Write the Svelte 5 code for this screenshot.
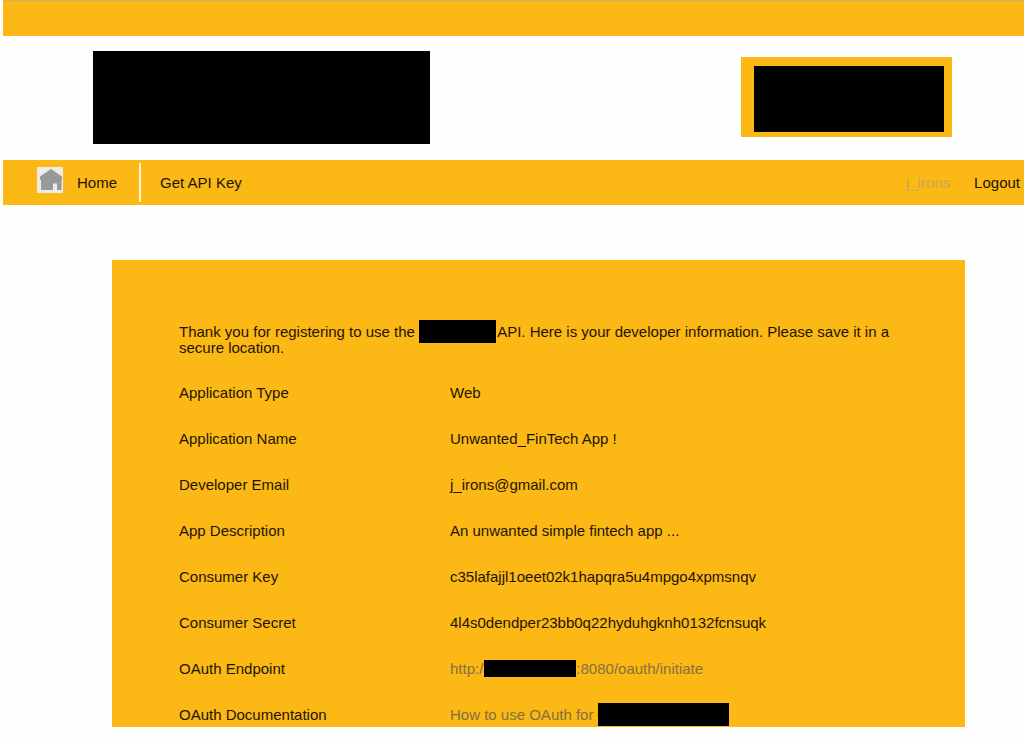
<script>
  const details = [
    { label: 'Application Type', value: 'Web' },
    { label: 'Application Name', value: 'Unwanted_FinTech App !' },
    { label: 'Developer Email', value: 'j_irons@gmail.com' },
    { label: 'App Description', value: 'An unwanted simple fintech app ...' },
    { label: 'Consumer Key', value: 'c35lafajjl1oeet02k1hapqra5u4mpgo4xpmsnqv' },
    { label: 'Consumer Secret', value: '4l4s0dendper23bb0q22hyduhgknh0132fcnsuqk' }
  ];
</script>

<div class="page">
  <div class="strip"></div>

  <header>
    <div class="brand"></div>
    <div class="badge"><div class="badge-fill"></div></div>
  </header>

  <nav>
    <a class="home" href="#home">
      <svg width="26" height="26" viewBox="0 0 26 26" aria-hidden="true">
        <rect width="26" height="26" fill="#ececec" />
        <path d="M14 2 L25 9.5 V13 H24.5 V23 H20 V16.5 H16 V23 H4 V13 H3 V9.5 Z" fill="#999" />
      </svg>
      <span>Home</span>
    </a>
    <a class="key" href="#key">Get API Key</a>
    <span class="user">j_irons</span>
    <a href="#logout">Logout</a>
  </nav>

  <main>
    <p>
      Thank you for registering to use the <span class="mask name"></span>API. Here is your developer
      information. Please save it in a secure location.
    </p>
    <table>
      <tbody>
        {#each details as item}
          <tr><th scope="row">{item.label}</th><td>{item.value}</td></tr>
        {/each}
        <tr>
          <th scope="row">OAuth Endpoint</th>
          <td><a href="#endpoint">http:/<span class="mask host"></span>:8080/oauth/initiate</a></td>
        </tr>
        <tr>
          <th scope="row">OAuth Documentation</th>
          <td><a href="#docs">How to use OAuth for <span class="mask product"></span></a></td>
        </tr>
      </tbody>
    </table>
  </main>
</div>

<style>
  :global(body) {
    background: #fefefe;
  }

  .page {
    padding: 0 0 18px 3px;
    font: 15px/16px 'Liberation Sans', Arial, sans-serif;
    color: #1c1503;
  }

  a {
    color: inherit;
    text-decoration: none;
  }

  .strip {
    height: 35px;
    background: #fcb814;
    border-top: 1px solid #d0ae62;
  }

  header {
    display: flex;
    justify-content: space-between;
    align-items: flex-start;
    padding: 15px 72px 16px 90px;
  }

  .brand {
    width: 337px;
    height: 93px;
    background: #000;
  }

  .badge {
    margin-top: 6px;
    padding: 9px 8px 5px 13px;
    background: #fcb814;
  }

  .badge-fill {
    width: 190px;
    height: 66px;
    background: #000;
  }

  nav {
    display: flex;
    align-items: center;
    height: 45px;
    padding: 0 4px 0 34px;
    background: #fcb814;
  }

  .home {
    display: flex;
    align-items: center;
    gap: 14px;
    height: 39px;
    padding-right: 22px;
    border-right: 2px solid #fff4d8;
  }

  .home svg {
    margin-bottom: 5px;
  }

  .key {
    margin-left: 19px;
  }

  .user {
    margin: 0 24px 0 auto;
    color: #c9a75a;
  }

  main {
    margin: 55px 59px 0 109px;
    padding: 64px 67px 4px;
    background: #fcb814;
  }

  p {
    margin: 0 0 29px;
  }

  table {
    width: 100%;
    border-collapse: collapse;
    table-layout: fixed;
  }

  th,
  td {
    padding: 0 0 30px;
    text-align: left;
    vertical-align: top;
    font-weight: normal;
  }

  th {
    width: 271px;
  }

  tr:last-child > * {
    padding-bottom: 0;
  }

  td a {
    color: #84703f;
  }

  .mask {
    display: inline-block;
    vertical-align: middle;
    height: 23px;
    margin: -8px 0 -4px;
    background: #000;
  }

  .name {
    width: 77px;
    margin-right: 1px;
  }

  .host {
    width: 92px;
    height: 17px;
    margin-left: 1px;
  }

  .product {
    width: 131px;
  }
</style>
